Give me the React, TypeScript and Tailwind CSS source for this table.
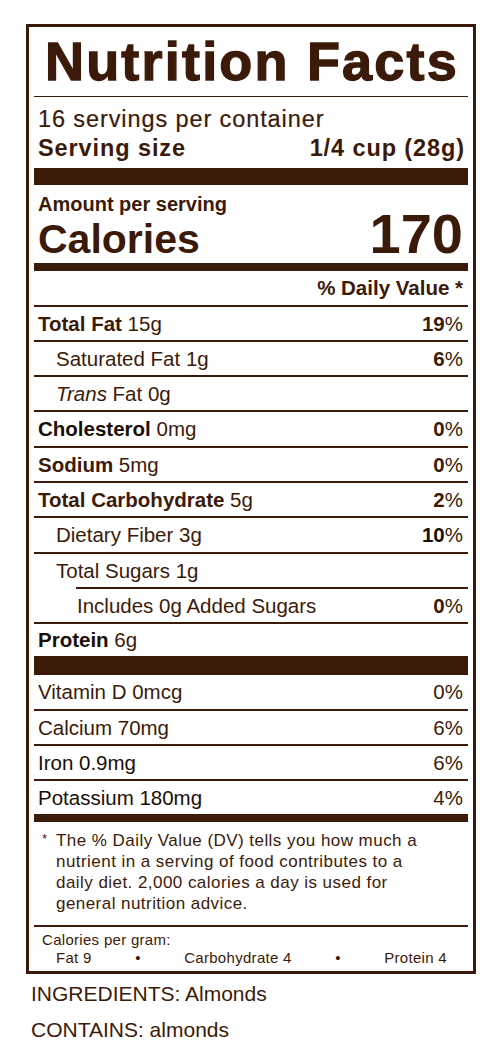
import React from "react";

type RowProps = {
  h: string;
  indent?: string;
  right?: React.ReactNode;
  children: React.ReactNode;
};

// one nutrient line; h is the full height/leading class pair
const Row = ({ h, indent = "pl-[4px]", right, children }: RowProps) => (
  <div className={`flex justify-between pr-[5px] text-[20.5px] ${h} ${indent}`}>
    <span>{children}</span>
    {right && <span>{right}</span>}
  </div>
);

const Line = ({ inset = "" }: { inset?: string }) => (
  <div className={`h-[2px] bg-[#3b1a0a] ${inset}`} />
);

const Pct = ({ n, dark }: { n: string; dark?: boolean }) => (
  <>
    <b className={dark ? "text-[#1a0e08]" : ""}>{n}</b>%
  </>
);

export default function App() {
  return (
    <div
      className="min-h-screen bg-white pt-[24px] pl-[26px] text-[#3b1a0a]"
      style={{ fontFamily: '"Liberation Sans", Arial, sans-serif' }}
    >
      <div className="w-[450px] border-[3px] border-[#3b1a0a] px-[5px]">
        <h1 className="h-[69px] pl-[2px] text-center text-[54px] font-bold leading-[69px] tracking-[2.2px] [-webkit-text-stroke:1.3px_#3b1a0a]">
          Nutrition Facts
        </h1>
        <div className="h-px bg-[#3b1a0a]" />

        <div className="px-[4px] pt-[10px] pb-[8px]">
          <div className="text-[23.5px] leading-[24px] tracking-[0.9px] [-webkit-text-stroke:0.2px_#3b1a0a]">
            16 servings per container
          </div>
          <div className="mt-[5px] flex justify-between text-[23.5px] font-bold leading-[24px] tracking-[0.9px]">
            <span>Serving size</span>
            <span className="-mr-[1px]">1/4 cup (28g)</span>
          </div>
        </div>
        <div className="h-[17px] bg-[#3b1a0a]" />

        <div className="px-[4px] pt-[7px]">
          <div className="text-[20px] font-bold leading-[24px]">
            Amount per serving
          </div>
          <div className="flex h-[47px] items-baseline justify-between pr-[1px] font-bold">
            <span className="text-[41px] leading-[36px]">Calories</span>
            <span className="text-[56px] leading-[36px]">170</span>
          </div>
        </div>
        <div className="h-[8px] bg-[#3b1a0a]" />

        <div className="h-[34px] pr-[5px] text-right text-[20.5px] font-bold leading-[34px]">
          % Daily Value *
        </div>
        <Line />

        <Row h="h-[33px] leading-[33px]" right={<Pct n="19" />}>
          <b>Total Fat</b> 15g
        </Row>
        <Line />
        <Row h="h-[33px] leading-[33px]" indent="pl-[22px]" right={<Pct n="6" />}>
          Saturated Fat 1g
        </Row>
        <Line />
        <Row h="h-[33px] leading-[33px]" indent="pl-[22px]">
          <i>Trans</i> Fat 0g
        </Row>
        <Line />
        <Row h="h-[34px] leading-[34px]" right={<Pct n="0" />}>
          <b className="text-[#1a0e08]">Cholesterol</b> 0mg
        </Row>
        <Line />
        <Row h="h-[33px] leading-[33px]" right={<Pct n="0" />}>
          <b>Sodium</b> 5mg
        </Row>
        <Line />
        <Row h="h-[33px] leading-[33px]" right={<Pct n="2" />}>
          <b>Total Carbohydrate</b> 5g
        </Row>
        <Line />
        <Row h="h-[34px] leading-[34px]" indent="pl-[22px]" right={<Pct n="10" dark />}>
          Dietary Fiber 3g
        </Row>
        <Line />
        <Row h="h-[33px] leading-[33px]" indent="pl-[22px]">
          Total Sugars 1g
        </Row>
        <Line inset="ml-[42px]" />
        <Row h="h-[33px] leading-[33px]" indent="pl-[43px]" right={<Pct n="0" />}>
          Includes 0g Added Sugars
        </Row>
        <Line />
        <Row h="h-[32px] leading-[32px]">
          <b className="text-[#1a0e08]">Protein</b> 6g
        </Row>
        <div className="h-[19px] bg-[#3b1a0a]" />

        <Row h="h-[34px] leading-[34px]" right="0%">
          Vitamin D 0mcg
        </Row>
        <Line />
        <Row h="h-[33px] leading-[33px]" right="6%">
          Calcium 70mg
        </Row>
        <Line />
        <Row h="h-[33px] leading-[33px]" right="6%">
          <span className="text-[#1a0e08]">Iron 0.9mg</span>
        </Row>
        <Line />
        <Row h="h-[33px] leading-[33px]" right="4%">
          <span className="text-[#1a0e08]">Potassium 180mg</span>
        </Row>
        <div className="h-[8px] bg-[#3b1a0a]" />

        <div className="flex pt-[8px] pb-[11px] pl-[8px]">
          <span className="w-[14px] text-[13px] leading-[18px]">*</span>
          <p className="text-[17px] leading-[21px] tracking-[0.45px]">
            The % Daily Value (DV) tells you how much a<br />
            nutrient in a serving of food contributes to a<br />
            daily diet. 2,000 calories a day is used for<br />
            general nutrition advice.
          </p>
        </div>
        <Line />

        <div className="pt-[4px] pb-[4px] text-[15px] leading-[18px] tracking-[0.3px]">
          <div className="pl-[8px]">Calories per gram:</div>
          <div className="ml-[22px] flex w-[391px] justify-between">
            <span>Fat 9</span>
            <span>•</span>
            <span>Carbohydrate 4</span>
            <span>•</span>
            <span>Protein 4</span>
          </div>
        </div>
      </div>

      <div className="pl-[5px] text-[21px] leading-[36px]">
        <div className="mt-[2px]">INGREDIENTS: Almonds</div>
        <div>CONTAINS: almonds</div>
      </div>
    </div>
  );
}
